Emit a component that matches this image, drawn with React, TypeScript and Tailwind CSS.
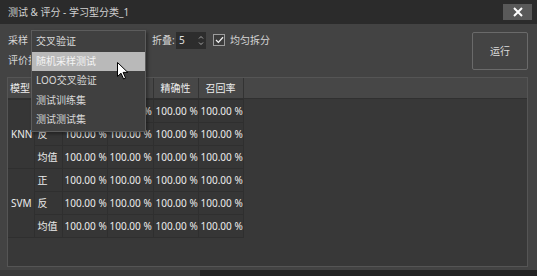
import { FC } from "react";

const FONT = '"Noto Sans", "Noto Sans CJK SC", sans-serif';

interface Row {
  model?: string;
  span?: number;
  cls: string;
}

const rows: Row[] = [
  { model: "KNN", span: 3, cls: "正" },
  { cls: "反" },
  { cls: "均值" },
  { model: "SVM", span: 3, cls: "正" },
  { cls: "反" },
  { cls: "均值" },
];

const items = ["交叉验证", "随机采样测试", "LOO交叉验证", "测试训练集", "测试测试集"];

const Cols: FC = () => (
  <colgroup>
    <col className="w-[26px]" />
    <col className="w-[28px]" />
    <col className="w-[45px]" />
    <col className="w-[46px]" />
    <col className="w-[45px]" />
    <col className="w-[45px]" />
  </colgroup>
);

const Cursor: FC = () => (
  <svg width="12" height="18" viewBox="0 0 12 18" className="absolute left-[117px] top-[62px]">
    <path
      d="M0.5 0.5 L0.5 14.5 L4 11.2 L6.6 17 L8.6 16.1 L6.1 10.4 L10.8 10.4 Z"
      fill="#ffffff"
      stroke="#000000"
      strokeWidth="1"
      strokeLinejoin="round"
    />
  </svg>
);

const App: FC = () => {
  return (
    <div
      className="w-[537px] h-[276px] bg-[#1e1e1e] flex flex-col overflow-hidden text-[10px]"
      style={{ fontFamily: FONT }}
    >
      <div className="h-[270px] flex flex-col bg-[#434343] relative">
        {/* title bar */}
        <div className="h-[24px] bg-[#2b2b2b] flex items-center justify-between pl-[8px] pr-[5px]">
          <span className="text-[#d2d2d2]">测试 &amp; 评分 - 学习型分类_1</span>
          <button className="w-[29px] h-[16px] bg-[#595959] flex items-center justify-center">
            <svg width="10" height="10" viewBox="0 0 10 10">
              <path d="M1 1 L9 9 M9 1 L1 9" stroke="#ffffff" strokeWidth="2" />
            </svg>
          </button>
        </div>

        {/* body */}
        <div className="flex-1 flex flex-col pl-[7px] pr-[9px] pt-[6px] pb-[3px]">
          <div className="h-[47px] flex justify-between">
            <div className="flex flex-col text-[#d6d6d6]">
              <div className="h-[20px] flex items-center">
                <span className="w-[24px] pl-px">采样</span>
                <span className="w-[115px]" />
                <span className="ml-[6px] w-[24px]">折叠:</span>
                <div className="w-[30px] h-[17px] bg-[#2d2d2d] flex items-center justify-between pl-[3px] pr-[2px]">
                  <span className="text-[#e0e0e0]">5</span>
                  <svg width="6" height="11" viewBox="0 0 6 11">
                    <path d="M1 3.5 L3 1.5 L5 3.5 M1 7.5 L3 9.5 L5 7.5" stroke="#a8a8a8" fill="none" strokeWidth="1" />
                  </svg>
                </div>
                <span className="ml-[7px] w-[12px] h-[12px] border border-[#9c9c9c] bg-[#3b3b3b] flex items-center justify-center">
                  <svg width="9" height="8" viewBox="0 0 9 8">
                    <path d="M1 4 L3.4 6.4 L8 1.2" stroke="#f2f2f2" fill="none" strokeWidth="1.3" />
                  </svg>
                </span>
                <span className="ml-[5px]">均匀拆分</span>
              </div>
              <div className="h-[20px] flex items-center">
                <span className="pl-px">评价指标</span>
              </div>
            </div>
            <button className="mt-[2px] w-[56px] h-[38px] border border-[#6a6a6a] bg-[#444444] text-[#dcdcdc] rounded-[2px]">
              运行
            </button>
          </div>

          {/* table frame */}
          <div className="flex-1 border border-[#555555] bg-[#383838] flex flex-col items-start">
            <div className="h-[21px] w-full bg-[#474747] border-b border-[#303030]">
              <table className="w-[235px] table-fixed border-collapse text-[#ececec]">
                <Cols />
                <thead>
                  <tr className="h-[20px]">
                    <th className="font-normal text-left pl-[2px] border-r border-[#333333]">模型</th>
                    <th className="font-normal border-r border-[#333333]" />
                    <th className="font-normal border-r border-[#333333]" />
                    <th className="font-normal border-r border-[#333333]" />
                    <th className="font-normal border-r border-[#333333]">精确性</th>
                    <th className="font-normal border-r border-[#333333]">召回率</th>
                  </tr>
                </thead>
              </table>
            </div>
            <table className="w-[235px] table-fixed border-collapse text-[#ececec]">
              <Cols />
              <tbody>
                {rows.map((r, i) => (
                  <tr key={i} className="h-[23px]">
                    {r.model && (
                      <td rowSpan={r.span} className="pl-[3px] border border-[#2f2f2f] border-l-0 bg-[#363636]">
                        {r.model}
                      </td>
                    )}
                    <td className="pl-[3px] border border-[#2f2f2f] bg-[#363636]">{r.cls}</td>
                    {[0, 1, 2, 3].map((c) => (
                      <td key={c} className="pl-[2px] border border-[#2f2f2f] bg-[#363636] whitespace-nowrap">
                        100.00 %
                      </td>
                    ))}
                  </tr>
                ))}
              </tbody>
            </table>
          </div>
        </div>

        {/* open dropdown */}
        <div className="absolute left-[31px] top-[30px] w-[115px] border border-[#5c5c5c] bg-[#404040] py-px flex flex-col text-[#d8d8d8] shadow-[2px_2px_3px_rgba(0,0,0,0.35)]">
          {items.map((t, i) => (
            <div
              key={t}
              className={
                i === 1
                  ? "h-[19.5px] flex items-center pl-[4px] bg-[#b9b9b9] text-[#f4f4f4]"
                  : "h-[19.5px] flex items-center pl-[4px]"
              }
            >
              {t}
            </div>
          ))}
        </div>
        <Cursor />
      </div>
      <div className="flex-1 flex">
        <div className="w-[200px] bg-[#3a3a3a]" />
        <div className="flex-1 bg-[#222222]" />
      </div>
    </div>
  );
};

export default App;
